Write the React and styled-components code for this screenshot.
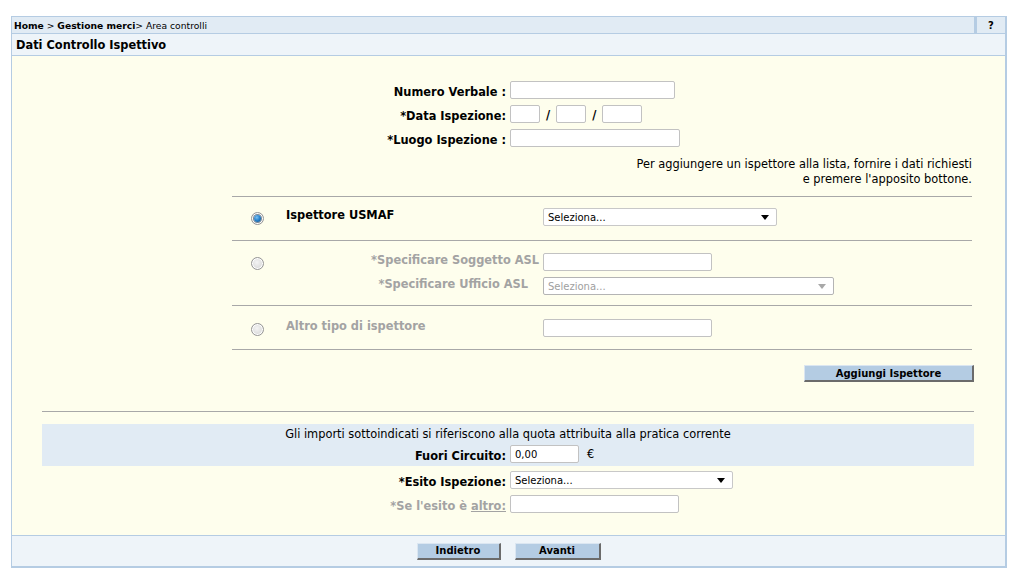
import React from "react";
import styled, { createGlobalStyle } from "styled-components";

const GlobalStyle = createGlobalStyle`
  body {
    margin: 0;
    background: #ffffff;
    font-family: "DejaVu Sans", Verdana, sans-serif;
    font-size: 11.4px;
    color: #000;
  }
`;

const Page = styled.div`
  padding: 16px 12px 12px 11px;
`;

const Frame = styled.div`
  border: 1px solid #b5cce3;
  border-right-width: 2px;
  border-bottom-width: 2px;
`;

const Crumbs = styled.div`
  display: flex;
  height: 16px;
  background: #e1ebf4;
  border-bottom: 1px solid #b5cce3;
  font-size: 9.2px;
`;

const CrumbText = styled.div`
  flex: 1;
  display: flex;
  align-items: center;
  padding-left: 2px;
  b {
    font-weight: bold;
  }
`;

const HelpCell = styled.div`
  width: 28px;
  border-left: 3px solid #b5cce3;
  display: flex;
  align-items: center;
  justify-content: center;
  font-weight: bold;
  font-size: 10px;
`;

const Title = styled.div`
  height: 21px;
  display: flex;
  align-items: center;
  padding-left: 4px;
  background: #eef4f9;
  border-bottom: 1px solid #b5cce3;
  font-weight: bold;
`;

const Body = styled.div`
  background: #fefeed;
  padding: 25px 31px 24px 30px;
  height: 479px;
  box-sizing: border-box;
`;

const FieldRow = styled.div`
  display: grid;
  grid-template-columns: 1fr 1fr;
  column-gap: 4px;
  align-items: center;
  height: 18px;
  margin-bottom: ${(p) => p.$mb ?? 6}px;
  margin-top: ${(p) => p.$mt ?? 0}px;
`;

const Label = styled.label`
  text-align: right;
  font-weight: bold;
  padding-top: 3px;
  color: ${(p) => (p.$muted ? "#a3a3a3" : "#000")};
  white-space: nowrap;
  a {
    color: inherit;
    text-decoration: underline;
  }
`;

const Inline = styled.div`
  display: flex;
  align-items: center;
`;

const TextBox = styled.input`
  box-sizing: border-box;
  width: ${(p) => p.$w}px;
  height: 18px;
  border: 1px solid #c2c2c2;
  border-radius: 2px;
  background: #fff;
  font-family: inherit;
  font-size: 10px;
  padding: 0 4px;
  outline: none;
`;

const Slash = styled.span`
  margin: 0 6px;
  font-weight: bold;
  padding-top: 2px;
`;

const Euro = styled.span`
  margin-left: 8px;
`;

const SelectBox = styled.div`
  box-sizing: border-box;
  width: ${(p) => p.$w}px;
  height: 18px;
  border: 1px solid ${(p) => (p.$disabled ? "#b4b4b4" : "#c8c8c8")};
  border-radius: 2px;
  background: #fff;
  display: flex;
  align-items: center;
  justify-content: space-between;
  padding: 0 7px 0 4px;
  font-size: 10px;
  color: ${(p) => (p.$disabled ? "#a0a0a0" : "#000")};
  &::after {
    content: "";
    border-left: 4px solid transparent;
    border-right: 4px solid transparent;
    border-top: 5px solid ${(p) => (p.$disabled ? "#a8a8a8" : "#000")};
  }
`;

const Note = styled.div`
  text-align: right;
  line-height: 15px;
  padding: 4px 2px 9px 0;
`;

const Inspectors = styled.div`
  margin-left: 190px;
  margin-right: 2px;
  border-top: 1px solid #a8a8a8;
`;

const InspectorRow = styled.div`
  display: grid;
  grid-template-columns: 50px 253px 1fr;
  column-gap: 4px;
  row-gap: 6px;
  align-items: center;
  padding: ${(p) => p.$pad};
  border-bottom: 1px solid #a8a8a8;
`;

const Radio = styled.span`
  justify-self: center;
  box-sizing: border-box;
  width: 13px;
  height: 13px;
  border-radius: 50%;
  border: 1px solid #959595;
  box-shadow: inset 0 0 0 1px #ffffff;
  background: radial-gradient(circle at 45% 40%, #f4f4f4 0%, #dedede 60%, #c8c8c8 100%);
  display: flex;
  align-items: center;
  justify-content: center;
  margin: 2px 0 0 1px;
  &::after {
    content: "";
    width: 7px;
    height: 7px;
    border-radius: 50%;
    display: ${(p) => (p.$checked ? "block" : "none")};
    background: radial-gradient(circle at 40% 35%, #7cc0f0 0%, #2a86d0 45%, #0d4a80 100%);
    box-shadow: 0 0 0 1px #7d8a96;
  }
`;

const RowLabel = styled.span`
  font-weight: bold;
  color: ${(p) => (p.$muted ? "#a3a3a3" : "#000")};
  text-align: ${(p) => (p.$right ? "right" : "left")};
  padding-right: ${(p) => p.$pr || 0}px;
  margin-top: -4px;
  white-space: nowrap;
`;

const ButtonRow = styled.div`
  display: flex;
  justify-content: ${(p) => p.$justify || "center"};
  gap: 14px;
  margin: ${(p) => p.$margin || 0};
`;

const Button = styled.button`
  box-sizing: border-box;
  width: ${(p) => p.$w}px;
  height: 17px;
  padding: 0;
  background: #b4cce3;
  border: 1px solid #dbe6f1;
  border-right: 2px solid #6b6b6b;
  border-bottom: 2px solid #6b6b6b;
  font-family: inherit;
  font-size: 10px;
  font-weight: bold;
  color: #000;
  cursor: pointer;
`;

const Rule = styled.div`
  border-top: 1px solid #a8a8a8;
  margin-top: 29px;
`;

const Band = styled.div`
  margin-top: 12px;
  background: #e1ebf4;
  padding: 3px 0 3px;
`;

const BandText = styled.div`
  text-align: center;
  line-height: 15px;
  margin-bottom: 3px;
`;

const Footer = styled.div`
  height: 30px;
  background: #eef4f9;
  border-top: 1px solid #b5cce3;
  display: flex;
  align-items: center;
  justify-content: center;
`;

export default function App() {
  return (
    <>
      <GlobalStyle />
      <Page>
        <Frame>
          <Crumbs>
            <CrumbText>
              <b>Home</b>&nbsp;&gt;&nbsp;<b>Gestione merci</b>&gt; Area controlli
            </CrumbText>
            <HelpCell>?</HelpCell>
          </Crumbs>
          <Title>Dati Controllo Ispettivo</Title>
          <Body>
            <FieldRow>
              <Label>Numero Verbale :</Label>
              <Inline>
                <TextBox $w={165} />
              </Inline>
            </FieldRow>
            <FieldRow>
              <Label>*Data Ispezione:</Label>
              <Inline>
                <TextBox $w={30} />
                <Slash>/</Slash>
                <TextBox $w={30} />
                <Slash>/</Slash>
                <TextBox $w={40} />
              </Inline>
            </FieldRow>
            <FieldRow>
              <Label>*Luogo Ispezione :</Label>
              <Inline>
                <TextBox $w={170} />
              </Inline>
            </FieldRow>

            <Note>
              Per aggiungere un ispettore alla lista, fornire i dati richiesti
              <br />
              e premere l'apposito bottone.
            </Note>

            <Inspectors>
              <InspectorRow $pad="11px 0 14px">
                <Radio $checked />
                <RowLabel>Ispettore USMAF</RowLabel>
                <SelectBox $w={234}>Seleziona...</SelectBox>
              </InspectorRow>
              <InspectorRow $pad="12px 0 10px">
                <Radio />
                <RowLabel $muted $right>*Specificare Soggetto ASL</RowLabel>
                <TextBox $w={169} />
                <span />
                <RowLabel $muted $right $pr={11}>*Specificare Ufficio ASL</RowLabel>
                <SelectBox $w={291} $disabled>Seleziona...</SelectBox>
              </InspectorRow>
              <InspectorRow $pad="13px 0 12px">
                <Radio />
                <RowLabel $muted>Altro tipo di ispettore</RowLabel>
                <TextBox $w={169} />
              </InspectorRow>
            </Inspectors>

            <ButtonRow $justify="flex-end" $margin="15px 0 0">
              <Button $w={170}>Aggiungi Ispettore</Button>
            </ButtonRow>

            <Rule />

            <Band>
              <BandText>Gli importi sottoindicati si riferiscono alla quota attribuita alla pratica corrente</BandText>
              <FieldRow $mb={0}>
                <Label>Fuori Circuito:</Label>
                <Inline>
                  <TextBox $w={69} defaultValue="0,00" />
                  <Euro>€</Euro>
                </Inline>
              </FieldRow>
            </Band>

            <FieldRow $mt={5}>
              <Label>*Esito Ispezione:</Label>
              <Inline>
                <SelectBox $w={223}>Seleziona...</SelectBox>
              </Inline>
            </FieldRow>
            <FieldRow>
              <Label $muted>
                *Se l'esito è <a>altro:</a>
              </Label>
              <Inline>
                <TextBox $w={169} />
              </Inline>
            </FieldRow>
          </Body>
          <Footer>
            <ButtonRow>
              <Button $w={84}>Indietro</Button>
              <Button $w={86}>Avanti</Button>
            </ButtonRow>
          </Footer>
        </Frame>
      </Page>
    </>
  );
}
